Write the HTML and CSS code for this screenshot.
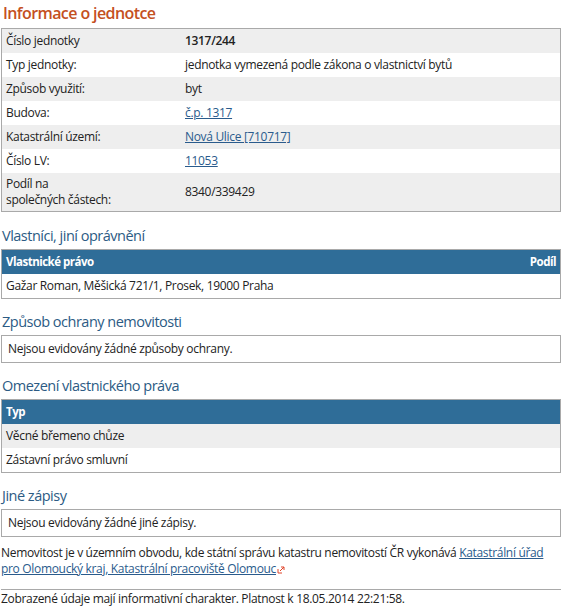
FILE: index.html
```html
<!DOCTYPE html>
<html lang="cs">
<head>
  <meta charset="UTF-8" />
  <title>Informace o jednotce</title>
  <link rel="stylesheet" href="styles.css">
</head>
<body>
  <div class="page">
    <h1>Informace o jednotce</h1>

    <!-- základní údaje -->
    <table class="info">
      <tr><td class="lbl">Číslo jednotky</td><td class="strong">1317/244</td></tr>
      <tr><td class="lbl">Typ jednotky:</td><td>jednotka vymezená podle zákona o vlastnictví bytů</td></tr>
      <tr><td class="lbl">Způsob využití:</td><td>byt</td></tr>
      <tr><td class="lbl">Budova:</td><td><a href="#">č.p. 1317</a></td></tr>
      <tr><td class="lbl">Katastrální území:</td><td><a href="#">Nová Ulice [710717]</a></td></tr>
      <tr><td class="lbl">Číslo LV:</td><td><a href="#">11053</a></td></tr>
      <tr><td class="lbl">Podíl na<br>společných částech:</td><td>8340/339429</td></tr>
    </table>

    <h2>Vlastníci, jiní oprávnění</h2>
    <table class="grid">
      <tr><th>Vlastnické právo</th><th class="right">Podíl</th></tr>
      <tr class="white"><td>Gažar Roman, Měšická 721/1, Prosek, 19000 Praha</td><td></td></tr>
    </table>

    <h2>Způsob ochrany nemovitosti</h2>
    <div class="box">Nejsou evidovány žádné způsoby ochrany.</div>

    <h2>Omezení vlastnického práva</h2>
    <table class="grid">
      <tr><th>Typ</th></tr>
      <tr><td>Věcné břemeno chůze</td></tr>
      <tr class="white"><td>Zástavní právo smluvní</td></tr>
    </table>

    <h2>Jiné zápisy</h2>
    <div class="box">Nejsou evidovány žádné jiné zápisy.</div>

    <p class="note">Nemovitost je v územním obvodu, kde státní správu katastru nemovitostí ČR vykonává <a href="#">Katastrální úřad</a><br><a href="#">pro Olomoucký kraj, Katastrální pracoviště Olomouc<svg class="ext" width="8" height="8" viewBox="0 0 8 8"><path d="M1 3v4h4" fill="none" stroke="#e0452a" stroke-width="1"/><path d="M3 5l4-4M4 1h3v3" fill="none" stroke="#e0452a" stroke-width="1"/></svg></a></p>

    <div class="footer">Zobrazené údaje mají informativní charakter. Platnost k 18.05.2014 22:21:58.</div>
  </div>
</body>
</html>
```

FILE: styles.css
```css
:root {
  --title-red: #c4501e;
  --head-blue: #2f6d98;
  --sub-blue: #2c5b84;
  --link: #2a5b8c;
  --line: #a9a9a9;
  --row-gray: #eeeeee;
}
body {
  margin: 0;
  font-family: 'Segoe UI', 'Open Sans', sans-serif;
  font-size: 12px;
  line-height: 16px;
  letter-spacing: -0.32px;
  color: #222;
  background: #fff;
}
.page {
  width: 560px;
  padding: 0 1px;
}
h1 {
  margin: 0;
  padding: 2px 0 0 2px;
  height: 26px;
  font-size: 16px;
  line-height: 22px;
  letter-spacing: -0.6px;
  font-weight: 600;
  color: var(--title-red);
}
h2 {
  margin: 13px 0 3px;
  padding-left: 1px;
  font-size: 14.5px;
  line-height: 20px;
  letter-spacing: -0.5px;
  font-weight: normal;
  color: var(--sub-blue);
}
.page > h2:first-of-type {
  margin-top: 14px;
}
a {
  color: var(--link);
}
table {
  width: 100%;
  border-collapse: collapse;
  border: 1px solid var(--line);
}
td, th {
  padding: 4px 4px;
  text-align: left;
  vertical-align: middle;
}
/* základní tabulka */
.info tr:nth-child(odd) {
  background: var(--row-gray);
}
.info tr:last-child td {
  padding: 3px 4px;
}
.info td.lbl {
  width: 171px;
}
.info td.strong {
  font-weight: 600;
}
/* tabulky se záhlavím */
.grid th {
  background: var(--head-blue);
  color: #fff;
  font-size: 11.5px;
  font-weight: 700;
  letter-spacing: -0.5px;
}
.grid th.right {
  text-align: right;
}
.grid tr:nth-child(even) {
  background: var(--row-gray);
}
.grid tr.white {
  background: #fff;
}
.box {
  border: 1px solid var(--line);
  padding: 5px 6px;
}
.note {
  margin: 8px 0 0;
}
.ext {
  margin-left: 1px;
  vertical-align: -1px;
}
.footer {
  margin-top: 12px;
  border-top: 1px solid var(--line);
  padding-top: 1px;
}
```
